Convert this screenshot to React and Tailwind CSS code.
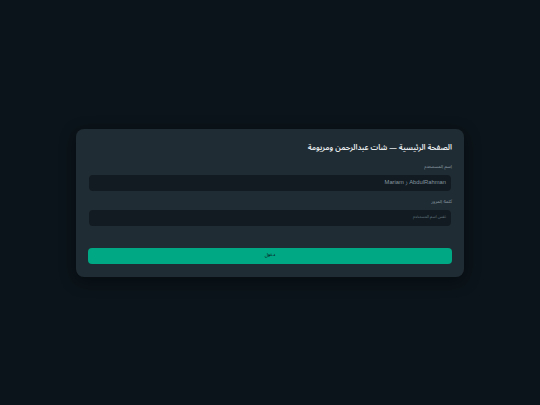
export default function App() {
  return (
    <div dir="rtl" className="min-h-[405px] bg-[#0b141a] flex items-center justify-center font-['Liberation_Sans','Noto_Sans_Arabic',sans-serif]">
      <div className="w-[388px] h-[148px] bg-[#202c33] rounded-[8px] px-3 pt-[13px] shadow-[0_4px_16px_rgba(0,0,0,0.4)]">
        <h1 className="font-['Noto_Sans_Arabic',sans-serif] text-[7.6px] leading-[12px] font-semibold text-[#e9edef] mb-[9px]">الصفحة الرئيسية — شات عبدالرحمن ومريومة</h1>
        <div className="font-['Noto_Sans_Arabic',sans-serif] text-[4.8px] leading-[8px] text-[#8696a0] mb-[4px]">اسم المستخدم</div>
        <div dir="ltr" className="h-4 mx-px bg-[#111b21] rounded-[4px] flex items-center justify-end px-[5px] text-[5.8px] text-[#8696a0] mb-[7px]">Mariam ز AbdulRahman</div>
        <div className="font-['Noto_Sans_Arabic',sans-serif] text-[4.8px] leading-[8px] text-[#8696a0] mb-[4px]">كلمة المرور</div>
        <div className="h-4 mx-px bg-[#111b21] rounded-[4px] flex items-center px-[5px] text-[4.1px] text-[#667781] font-['Noto_Sans_Arabic',sans-serif]">نفس اسم المستخدم</div>
        <button className="mt-[22px] w-full h-[16px] rounded-[4px] bg-[#00a884] text-[#0b141a] text-[4.5px] font-medium flex items-center justify-center font-['Noto_Sans_Arabic',sans-serif]">دخول</button>
      </div>
    </div>
  );
}
